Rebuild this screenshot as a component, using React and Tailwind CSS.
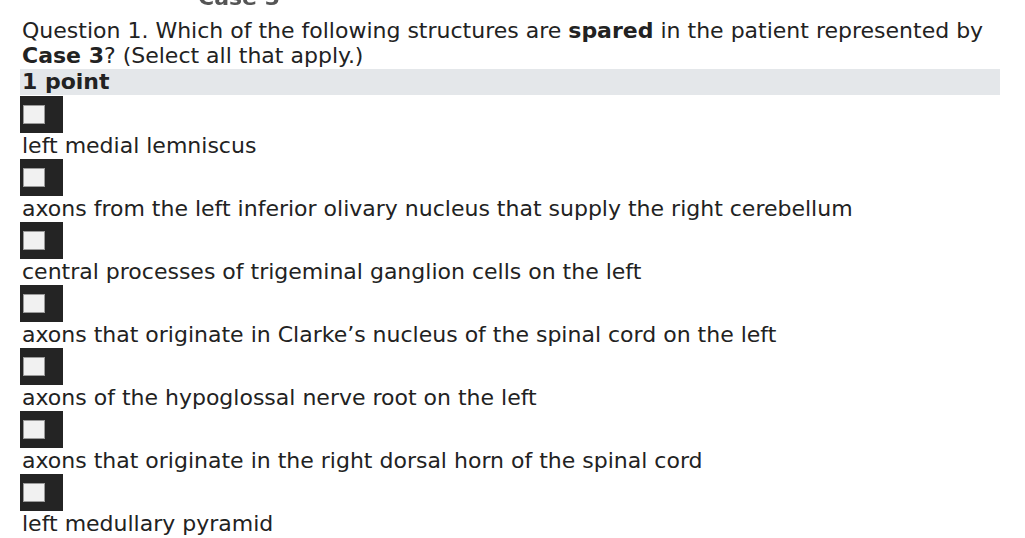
const OPTIONS = [
  "left medial lemniscus",
  "axons from the left inferior olivary nucleus that supply the right cerebellum",
  "central processes of trigeminal ganglion cells on the left",
  "axons that originate in Clarke\u2019s nucleus of the spinal cord on the left",
  "axons of the hypoglossal nerve root on the left",
  "axons that originate in the right dorsal horn of the spinal cord",
  "left medullary pyramid",
];

function Box() {
  return (
    <div className="w-[43px] h-[37px] bg-[#242424] pt-[9px] pl-[3px]">
      <div className="w-[22px] h-[19px] bg-[#f1f1f1] border border-[#9a9a9a]" />
    </div>
  );
}

export default function App() {
  return (
    <div
      className="w-[1025px] h-[538px] bg-white text-[#222] text-[22px] overflow-hidden"
      style={{ fontFamily: '"DejaVu Sans", sans-serif' }}
    >
      {/* cut-off case heading */}
      <div className="h-[18px] overflow-hidden pl-[198px]">
        <div className="mt-[-13px] leading-[22px] font-bold text-[#555] blur-[0.7px]">Case 3</div>
      </div>

      <div className="pl-[20px] w-[1000px]">
        <p className="leading-[25px] pl-[2px]">
          Question 1. Which of the following structures are <b>spared</b> in the patient represented by{" "}
          <b>Case 3</b>? (Select all that apply.)
        </p>
        <div className="bg-[#e4e7ea] leading-[26px] mt-[1px] font-bold pl-[2px]">1 point</div>

        <div className="pt-[1px]">
          {OPTIONS.map((o) => (
            <div key={o}>
              <Box />
              <div className="leading-[26px] pl-[2px]">{o}</div>
            </div>
          ))}
        </div>
      </div>
    </div>
  );
}
